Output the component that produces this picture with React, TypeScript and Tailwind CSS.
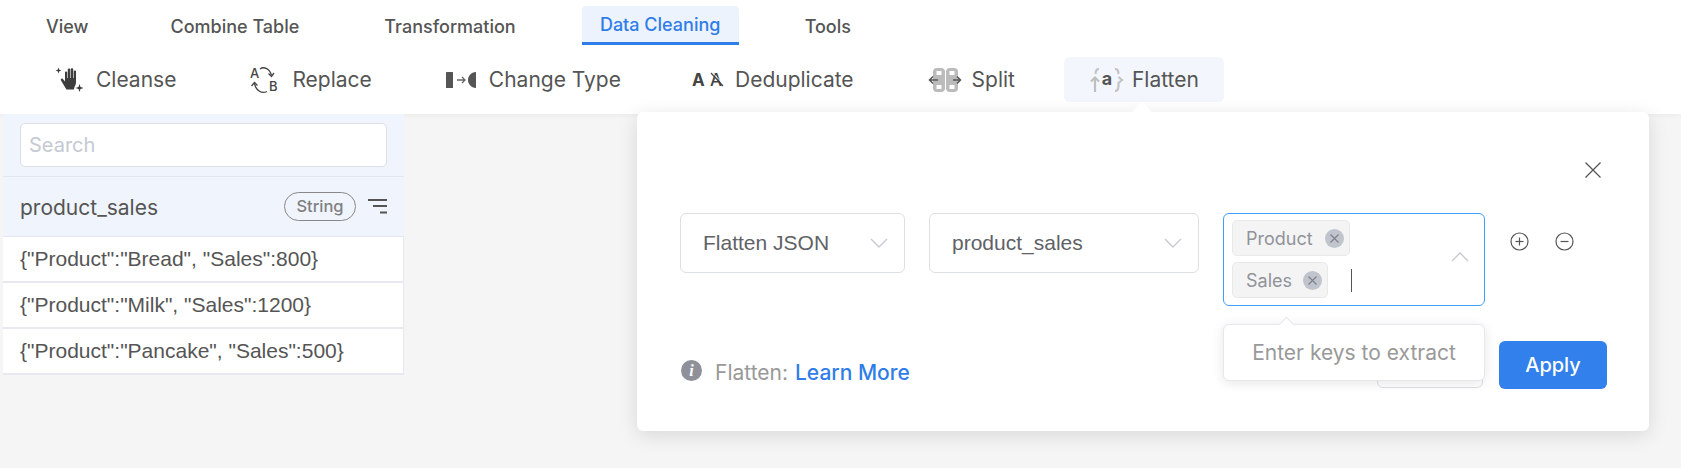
const inter = "font-['Inter',sans-serif]";

const tabs = [
  { label: "View", cls: "ml-[46px] pt-[1px] text-[#555]" },
  { label: "Combine Table", cls: "ml-[82px] pt-[1px] text-[#555]" },
  { label: "Transformation", cls: "ml-[85px] pt-[1px] text-[#555]" },
  {
    label: "Data Cleaning",
    cls: "ml-[66px] w-[157px] justify-center rounded-t-[4px] bg-[#edf3fd] pt-[1px] border-b-[3px] border-[#2f7de8] text-[#2f7de8]",
  },
  { label: "Tools", cls: "ml-[66px] pt-[1px] text-[#555]" },
];

const CleanseIcon = () => (
  <svg width="28" height="26" viewBox="0 0 28 26" fill="#3d3d3d">
    <path d="M3.500.500l.8 2.200 2.200.8-2.200.8-.8 2.200-.8-2.200L.5 3.500l2.200-.8zM24.500 17l1 3 3 1-3 1-1 3-1-3-3-1 3-1z" />
    <path d="M10 5.500c0-1.300 2.200-1.300 2.200 0V11h.6V2.500c0-1.400 2.400-1.400 2.400 0V11h.6V2.200c0-1.400 2.400-1.400 2.400 0V11h.6V4.500c0-1.300 2.200-1.300 2.200 0V15c0 2-.6 3.500-1.500 5l-.6 2.500h-7.500l-5.500-9.200c-.7-1.400 1.100-2.500 2-1.400l2.100 2.600z" />
  </svg>
);

const ReplaceIcon = () => (
  <svg width="28" height="26" viewBox="0 0 28 26" fill="none" stroke="#444" strokeWidth="1.300" className="overflow-visible">
    <text x="0" y="11" fontFamily="Inter, sans-serif" fontWeight="500" fontSize="13" fill="#444" stroke="none">A</text>
    <text x="19" y="24" fontFamily="Inter, sans-serif" fontWeight="500" fontSize="13" fill="#444" stroke="none">B</text>
    <path d="M10 2C14-1 20 2 21.500 8.500" />
    <path d="M18.500 6.500l3 3 2.500-3.500" />
    <path d="M17 24.500C12 27 6 24 4.500 16.500" />
    <path d="M1.500 19l3-3.500 3 3" />
  </svg>
);

const ChangeTypeIcon = () => (
  <svg width="30" height="16" viewBox="0 0 30 16" fill="none">
    <rect x="0" y="0" width="7" height="16" rx="0.500" fill="#555" />
    <path d="M11 8h8M16 5l3 3-3 3" stroke="#666" strokeWidth="1.300" />
    <path d="M30 0v16c-4 0-8-3.500-8-8s4-8 8-8z" fill="#555" />
  </svg>
);

const DedupIcon = () => (
  <svg width="32" height="15" viewBox="0 0 32 15" fill="none" className="overflow-visible">
    <text x="0" y="14" fontFamily="Inter, sans-serif" fontWeight="700" fontSize="17" fill="#444">A</text>
    <text x="18" y="14" fontFamily="Inter, sans-serif" fontWeight="500" fontSize="17" fill="#444">A</text>
    <path d="M19 1l12 13" stroke="#444" strokeWidth="1.200" />
    <path d="M20 0l12 13" stroke="#fff" strokeWidth="0.800" />
  </svg>
);

const SplitIcon = () => (
  <svg width="34" height="24" viewBox="0 0 34 24" fill="none">
    <rect x="5" y="0" width="12" height="24" rx="4" fill="#bbb" />
    <rect x="18" y="0" width="12" height="24" rx="4" fill="#bbb" />
    <rect x="8.500" y="3" width="5" height="4" fill="#fff" />
    <rect x="8.500" y="17" width="5" height="4" fill="#fff" />
    <rect x="21.500" y="3" width="5" height="4" fill="#fff" />
    <rect x="21.500" y="17" width="5" height="4" fill="#fff" />
    <path d="M10 12H1.500M5 8.500L1.500 12 5 15.500M25 12h7.500M29 8.500l3.500 3.500-3.500 3.500" stroke="#555" strokeWidth="1.500" />
  </svg>
);

const FlattenIcon = () => (
  <svg width="34" height="24" viewBox="0 0 34 24" fill="none">
    <path d="M9 1C5 1 6 4 5.500 6M25 1c4 0 3 3 3.500 5" stroke="#c4c4c4" strokeWidth="2.200" />
    <path d="M5 24V10M1 13.500l4-4 4 4" stroke="#bfbfbf" strokeWidth="2.200" />
    <path d="M25 23c4 0 3-3 3.500-5v-3l3.500-3-3.500-3" stroke="#c4c4c4" strokeWidth="2.200" />
    <text x="17" y="17" textAnchor="middle" fontFamily="Inter, sans-serif" fontWeight="700" fontSize="18" fill="#555">a</text>
  </svg>
);

const tools = [
  { label: "Cleanse", icon: <CleanseIcon />, cls: "ml-[55px] gap-[13px]" },
  { label: "Replace", icon: <ReplaceIcon />, cls: "ml-[74px] gap-[14px]" },
  { label: "Change Type", icon: <ChangeTypeIcon />, cls: "ml-[74px] gap-[13px]" },
  { label: "Deduplicate", icon: <DedupIcon />, cls: "ml-[71px] gap-[11px]" },
  { label: "Split", icon: <SplitIcon />, cls: "ml-[74px] gap-[10px]" },
];

const rows = [
  '{"Product":"Bread", "Sales":800}',
  '{"Product":"Milk", "Sales":1200}',
  '{"Product":"Pancake", "Sales":500}',
];

const Chevron = ({ up = false }: { up?: boolean }) => (
  <svg width="18" height="10" viewBox="0 0 18 10" fill="none" stroke="#c8cad2" strokeWidth="1.400">
    <path d={up ? "M1 9l8-8 8 8" : "M1 1l8 8 8-8"} />
  </svg>
);

const Tag = ({ label, cls }: { label: string; cls: string }) => (
  <div className={`flex items-center h-[36px] rounded-[5px] border border-[#e9e9eb] bg-[#f4f4f5] pl-[13px] pr-[5px] text-[18px] text-[#909399] ${cls}`}>
    <span>{label}</span>
    <span className="ml-auto flex h-[19px] w-[19px] items-center justify-center rounded-full bg-[#c0c4cc]">
      <svg width="11" height="11" viewBox="0 0 11 11" stroke="#7d818c" strokeWidth="1.100">
        <path d="M1.500 1.500l8 8M9.500 1.500l-8 8" />
      </svg>
    </span>
  </div>
);

const RoundBtn = ({ minus = false }: { minus?: boolean }) => (
  <svg width="19" height="19" viewBox="0 0 19 19" fill="none" stroke="#555" strokeWidth="1.200">
    <circle cx="9.500" cy="9.500" r="8.500" />
    <path d="M5.500 9.500h8" />
    {!minus && <path d="M9.500 5.500v8" />}
  </svg>
);

export default function App() {
  return (
    <div className={`relative flex h-[468px] w-full flex-col overflow-hidden bg-[#f5f5f5] ${inter}`}>
      {/* top nav */}
      <div className="h-[114px] shrink-0 bg-white shadow-[0_1px_6px_rgba(0,0,0,0.05)]">
        <div className="mt-[6px] flex h-[39px] text-[18px] font-medium">
          {tabs.map((t) => (
            <div key={t.label} className={`flex items-center ${t.cls}`}>
              {t.label}
            </div>
          ))}
        </div>
        <div className="mt-[12px] flex h-[45px] items-center text-[21px] text-[#555]">
          {tools.map((t) => (
            <div key={t.label} className={`flex items-center ${t.cls}`}>
              {t.icon}
              <span>{t.label}</span>
            </div>
          ))}
          <div className="ml-[49px] flex h-[45px] w-[160px] items-center gap-[8px] rounded-[6px] bg-[#f3f6fd] pl-[26px]">
            <FlattenIcon />
            <span>Flatten</span>
          </div>
        </div>
      </div>

      {/* column list */}
      <div className="ml-[3px] w-[401px]">
        <div className="border-b border-[#e4e7f0] bg-[#f0f4fc] px-[17px] pb-[9px] pt-[9px]">
          <div className="flex h-[44px] items-center rounded-[5px] border border-[#dcdfe6] bg-white px-[8px] text-[20px] text-[#c5c9d3]">
            Search
          </div>
        </div>
        <div className="flex h-[60px] items-center border-b border-[#e4e7f0] bg-[#f0f4fc] pl-[17px] pr-[17px]">
          <span className="pt-[2px] text-[21px] text-[#555]">product_sales</span>
          <span className="ml-auto flex h-[29px] w-[72px] items-center justify-center rounded-full border border-[#888] text-[16.500px] font-medium text-[#808080]">
            String
          </span>
          <svg className="ml-[12px]" width="19" height="15" viewBox="0 0 19 15" fill="#555">
            <rect x="0" y="0" width="19" height="2" />
            <rect x="5" y="6" width="14" height="2" />
            <rect x="12" y="12.500" width="7" height="2" />
          </svg>
        </div>
        {rows.map((r) => (
          <div
            key={r}
            className="flex h-[46px] items-center border-b-2 border-r border-[#e8e9f0] bg-white pl-[17px] font-['Liberation_Sans',sans-serif] text-[21px] text-[#555]"
          >
            {r}
          </div>
        ))}
      </div>

      {/* flatten popover */}
      <div className="absolute left-[637px] top-[112px] h-[319px] w-[1012px] rounded-[6px] bg-white shadow-[0_4px_20px_rgba(0,0,0,0.12)]">
        <div className="absolute left-[498px] top-[-7px] h-[14px] w-[14px] rotate-45 bg-white" />
        <svg className="absolute left-[948px] top-[50px]" width="16" height="16" viewBox="0 0 16 16" stroke="#555" strokeWidth="1.300">
          <path d="M.5.500l15 15M15.500.500l-15 15" />
        </svg>

        <div className="absolute left-[43px] top-[101px] flex items-start gap-[24px] font-['Liberation_Sans',sans-serif] text-[21px] text-[#606266]">
          <div className="flex h-[60px] w-[225px] items-center justify-between rounded-[6px] border border-[#dcdfe6] pl-[22px] pr-[16px]">
            <span>Flatten JSON</span>
            <Chevron />
          </div>
          <div className="flex h-[60px] w-[270px] items-center justify-between rounded-[6px] border border-[#dcdfe6] pl-[22px] pr-[16px]">
            <span>product_sales</span>
            <Chevron />
          </div>
          <div className={`relative h-[93px] w-[262px] rounded-[6px] border border-[#409eff] ${inter}`}>
            <div className="absolute left-[8px] top-[6px] flex flex-col gap-[6px]">
              <Tag label="Product" cls="w-[118px]" />
              <Tag label="Sales" cls="w-[96px]" />
            </div>
            <div className="absolute left-[127px] top-[55px] h-[23px] w-px bg-[#555]" />
            <div className="absolute left-[227px] top-[38px]">
              <Chevron up />
            </div>
          </div>
          <div className="ml-[1px] mt-[19px] flex gap-[26px]">
            <RoundBtn />
            <RoundBtn minus />
          </div>
        </div>

        <div className="absolute left-[44px] top-[245px] flex items-center text-[21px] font-medium">
          <svg className="mb-[4px]" width="21" height="21" viewBox="0 0 21 21">
            <circle cx="10.500" cy="10.500" r="10.500" fill="#8e9199" />
            <text x="10.500" y="16" textAnchor="middle" fontFamily="Liberation Serif, serif" fontStyle="italic" fontWeight="700" fontSize="16" fill="#fff">i</text>
          </svg>
          <span className="ml-[13px] font-normal text-[#999]">Flatten:</span>
          <span className="ml-[7px] text-[#2f7de8]">Learn More</span>
        </div>

        <div className="absolute left-[740px] top-[229px] h-[47px] w-[106px] rounded-[6px] border border-[#dcdfe6]" />
        <div className="absolute left-[862px] top-[229px] flex h-[48px] w-[108px] items-center justify-center rounded-[6px] bg-[#3180ec] text-[20px] font-medium text-white">
          Apply
        </div>

        {/* key hint */}
        <div className="absolute left-[586px] top-[212px] flex h-[57px] w-[262px] items-center justify-center rounded-[6px] border border-[#e4e7ed] bg-white text-[21px] text-[#999] shadow-[0_2px_12px_rgba(0,0,0,0.1)]">
          <div className="absolute left-[57px] top-[-6px] h-[11px] w-[11px] rotate-45 border-l border-t border-[#e4e7ed] bg-white" />
          Enter keys to extract
        </div>
      </div>
    </div>
  );
}
